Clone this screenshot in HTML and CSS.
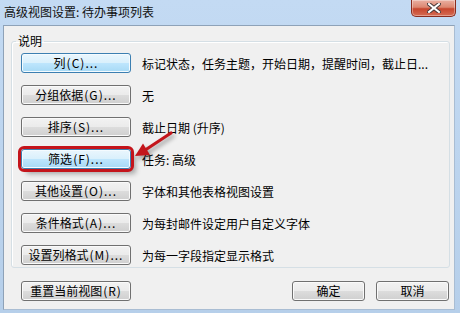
FILE: index.html
```html
<!DOCTYPE html>
<html lang="zh-CN">
<head>
<meta charset="UTF-8">
<title>高级视图设置: 待办事项列表</title>
<link rel="stylesheet" href="styles.css">
</head>
<body>
<div class="window">
    <div class="titlebar">
        <span class="title">高级视图设置: 待办事项列表</span>
        <button class="close" type="button">
            <svg width="14" height="10" viewBox="0 0 14 10">
                <path d="M2 1 L12 9 M12 1 L2 9" stroke="#4a3a3a" stroke-width="4" stroke-linecap="square"/>
                <path d="M2 1 L12 9 M12 1 L2 9" stroke="#fff" stroke-width="2" stroke-linecap="square"/>
            </svg>
        </button>
    </div>
    <div class="client">
        <fieldset class="group">
            <legend>说明</legend>
            <div class="row">
                <button class="btn btn-default" type="button">列<span class="key">(C)...</span></button>
                <span class="desc">标记状态，任务主题，开始日期，提醒时间，截止日...</span>
            </div>
            <div class="row">
                <button class="btn" type="button">分组依据<span class="key">(G)...</span></button>
                <span class="desc">无</span>
            </div>
            <div class="row">
                <button class="btn" type="button">排序<span class="key">(S)...</span></button>
                <span class="desc">截止日期 (升序)</span>
            </div>
            <div class="row">
                <button class="btn btn-default marked" type="button">筛选<span class="key">(F)...</span></button>
                <span class="desc">任务: 高级</span>
            </div>
            <div class="row">
                <button class="btn" type="button">其他设置<span class="key">(O)...</span></button>
                <span class="desc">字体和其他表格视图设置</span>
            </div>
            <div class="row">
                <button class="btn" type="button">条件格式<span class="key">(A)...</span></button>
                <span class="desc">为每封邮件设定用户自定义字体</span>
            </div>
            <div class="row">
                <button class="btn" type="button">设置列格式<span class="key">(M)...</span></button>
                <span class="desc">为每一字段指定显示格式</span>
            </div>
        </fieldset>
        <div class="footer">
            <button class="btn" type="button">重置当前视图<span class="key">(R)</span></button>
            <div class="spacer"></div>
            <button class="btn btn-small" type="button">确定</button>
            <button class="btn btn-small" type="button">取消</button>
        </div>
    </div>
    <!-- annotation arrow -->
    <svg class="arrow" width="60" height="40" viewBox="130 128 60 40">
        <path d="M171 133 L146 149.5" stroke="#c3161c" stroke-width="3.2" stroke-linecap="round"/>
        <polygon points="135,156 150,155 143,143.5" fill="#c3161c"/>
    </svg>
</div>
</body>
</html>
```
FILE: styles.css
```css
body {
    margin: 0;
    padding: 0;
    font-family: "Noto Sans CJK SC", "Liberation Sans", sans-serif;
    font-size: 12px;
    color: #000;
}
.window {
    position: relative;
    width: 460px;
    height: 313px;
    background: linear-gradient(#c3daf3, #b6cfea);
    overflow: hidden;
}
.titlebar {
    display: flex;
    height: 25px;
    padding-left: 4px;
    box-sizing: border-box;
}
.title {
    line-height: 24px;
    color: #111;
}
.close {
    margin-left: auto;
    margin-right: 4px;
    width: 45px;
    height: 17px;
    padding: 0;
    border: 1px solid #8a2c1e;
    border-top: none;
    border-radius: 0 0 5px 5px;
    background: linear-gradient(#eab0a2 0%, #dc8771 45%, #c7462e 55%, #d56c54 100%);
    box-shadow: inset 0 0 0 1px rgba(255, 255, 255, 0.35);
    display: flex;
    align-items: center;
    justify-content: center;
}
.client {
    margin: 0 5px 0 3px;
    height: 285px;
    box-sizing: border-box;
    border: 1px solid #8ea2b8;
    border-right-color: #a9bdd3;
    border-bottom-color: #a9bdd3;
    background: #f0f0f0;
}
.group {
    margin: 7px 4px 0 7px;
    padding: 4px 0 2px 9px;
    border: 1px solid #d5dfe5;
    border-radius: 3px;
    box-shadow: inset 1px 1px 0 #fff;
}
.group legend {
    padding: 0 2px;
    margin-left: -5px;
    line-height: 16px;
}
.row {
    display: flex;
    align-items: center;
    margin-bottom: 12px;
}
.row:last-child {
    margin-bottom: 0;
}
.btn {
    width: 110px;
    height: 20px;
    padding: 0;
    font-family: "Noto Sans CJK SC", "Liberation Sans", sans-serif;
    font-size: 12px;
    line-height: 16px;
    color: #000;
    white-space: nowrap;
    border: 1px solid #707070;
    border-radius: 3px;
    background: linear-gradient(#f2f2f2 0%, #ebebeb 50%, #dddddd 50%, #cfcfcf 100%);
    box-shadow: inset 0 0 0 1px #fafafa;
}
.btn .key {
    margin-left: 1px;
    letter-spacing: 1px;
}
.btn-default {
    border-color: #3c7fb1;
    background: linear-gradient(#eaf6fd 0%, #d9f0fc 50%, #bee6fd 50%, #a7d9f5 100%);
    box-shadow: inset 0 0 0 1px #f4fbff;
}
.marked {
    outline: 3px solid #c4141b;
    outline-offset: 0;
    box-shadow: inset 0 0 0 1px #f4fbff, 5px 5px 5px rgba(0, 0, 0, 0.3);
}
.desc {
    margin-left: 11px;
    white-space: nowrap;
}
.footer {
    display: flex;
    margin-top: 13px;
    padding: 0 5px 0 17px;
}
.spacer {
    flex: 1;
}
.btn-small {
    width: 73px;
    margin-left: 11px;
}
.arrow {
    position: absolute;
    left: 130px;
    top: 128px;
    filter: drop-shadow(2px 3px 2px rgba(0, 0, 0, 0.35));
}
```
